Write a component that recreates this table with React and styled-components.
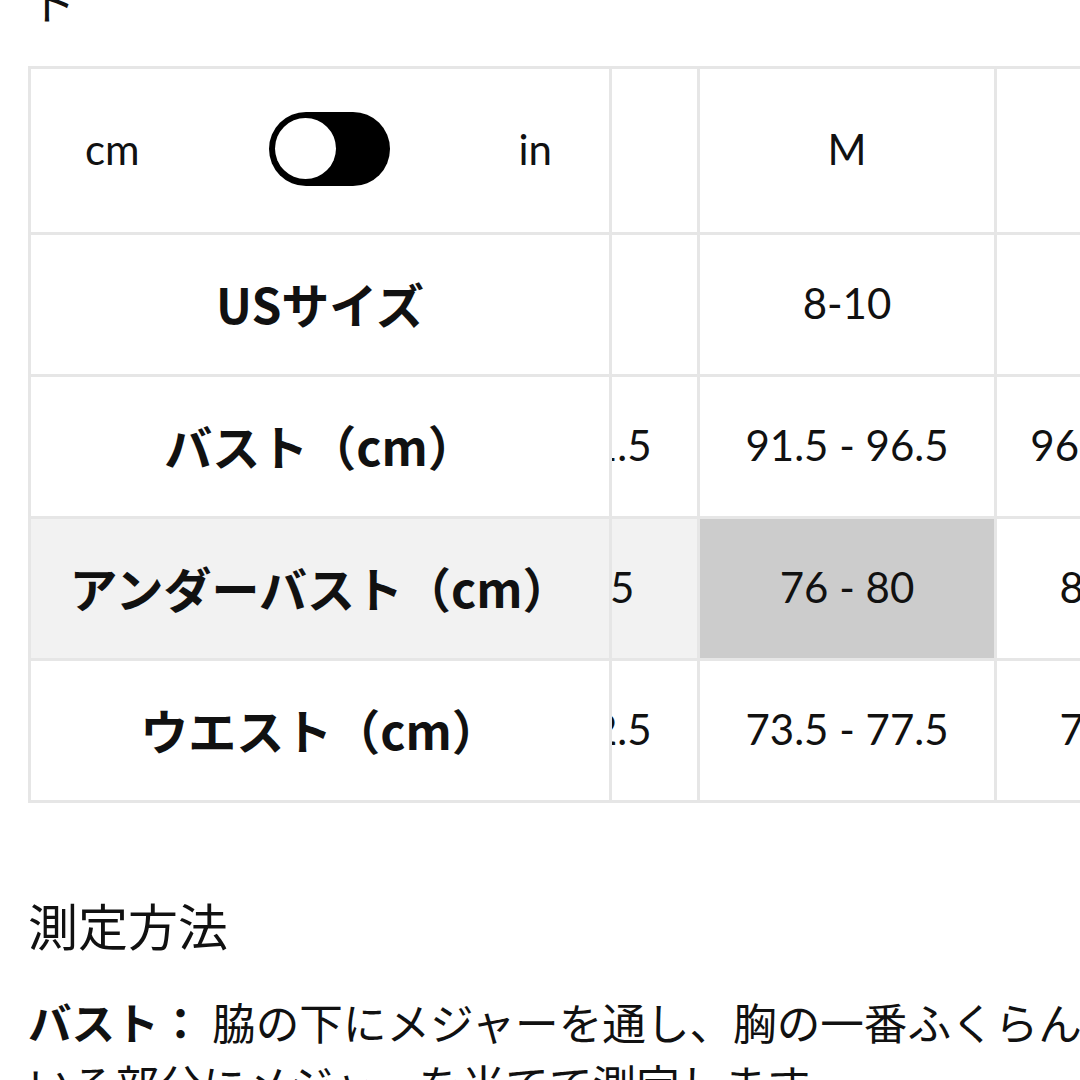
import { useLayoutEffect, useRef } from "react";
import styled, { createGlobalStyle } from "styled-components";

const GlobalStyle = createGlobalStyle`
  html, body {
    margin: 0;
    padding: 0;
    overflow: hidden;
    background: #fff;
  }
  body {
    font-family: "Lato", "Noto Sans CJK JP", sans-serif;
    color: #111;
  }
`;

const Page = styled("main")`
  width: 1180px;
  padding: 0 28px;
  margin-top: -33px;
`;

const PageTitle = styled("h2")`
  margin: 0 0 35px 3px;
  font-family: "Noto Sans CJK JP", sans-serif;
  font-weight: 400;
  font-size: 46px;
  line-height: 1.4;
`;

const Frame = styled("div")`
  border-top: 3px solid #e6e6e6;
  border-left: 3px solid #e6e6e6;
  overflow-x: auto;
  scrollbar-width: none;
  &::-webkit-scrollbar {
    display: none;
  }
`;

const Grid = styled("div")`
  display: grid;
  grid-template-columns: 581px repeat(${(p) => p.$cols}, 297px);
  grid-template-rows: 166px;
  grid-auto-rows: 142px;
  width: max-content;
`;

const tones = {
  plain: "#ffffff",
  row: "#f2f2f2",
  active: "#cccccc",
};

const Cell = styled("div")`
  display: flex;
  align-items: center;
  justify-content: center;
  border-right: 3px solid #e6e6e6;
  border-bottom: 3px solid #e6e6e6;
  background: ${(p) => tones[p.$tone || "plain"]};
  font-size: 42px;
  white-space: nowrap;
  padding-bottom: 4px;
`;

const LabelCell = styled(Cell)`
  position: sticky;
  left: 0;
  z-index: 1;
  font-family: "Noto Sans CJK JP", sans-serif;
  font-weight: 700;
  font-size: 48px;
`;

const UnitCell = styled(LabelCell)`
  justify-content: space-between;
  padding: 0 57px 4px 54px;
  font-family: "Lato", sans-serif;
  font-weight: 400;
  font-size: 42px;
`;

const Switch = styled("span")`
  display: flex;
  align-items: center;
  box-sizing: border-box;
  width: 121px;
  height: 74px;
  padding: 0 6px;
  border-radius: 37px;
  background: #000;
`;

const Knob = styled("span")`
  width: 61px;
  height: 61px;
  border-radius: 50%;
  background: #fff;
`;

const SectionTitle = styled("h3")`
  margin: 84px 0 28px;
  font-family: "Noto Sans CJK JP", sans-serif;
  font-weight: 400;
  font-size: 50px;
  line-height: 1.5;
`;

const Paragraph = styled("p")`
  margin: 0;
  font-family: "Noto Sans CJK JP", sans-serif;
  font-size: 43.6px;
  line-height: 62px;
  white-space: nowrap;
`;

const sizes = ["XS", "S", "M", "L", "XL"];

const rows = [
  { label: "USサイズ", values: ["0-2", "4-6", "8-10", "12-14", "16-18"] },
  {
    label: "バスト（cm）",
    values: ["81.5 - 86.5", "86.5 - 91.5", "91.5 - 96.5", "96.5 - 101.5", "101.5 - 106.5"],
  },
  {
    label: "アンダーバスト（cm）",
    values: ["67 - 71.5", "72 - 75.5", "76 - 80", "80 - 84.5", "85 - 89"],
    hover: 2,
  },
  {
    label: "ウエスト（cm）",
    values: ["64.5 - 68.5", "68.5 - 72.5", "73.5 - 77.5", "78 - 82.5", "83 - 87.5"],
  },
];

const toneFor = (row, index) => {
  if (row.hover === undefined) return "plain";
  if (index === row.hover) return "active";
  return index < row.hover ? "row" : "plain";
};

const SizeChart = () => {
  const frameRef = useRef(null);

  useLayoutEffect(() => {
    // scrolled so that the M column sits next to the sticky labels
    if (frameRef.current) frameRef.current.scrollLeft = 506;
  }, []);

  return (
    <Frame ref={frameRef}>
      <Grid $cols={sizes.length}>
        <UnitCell>
          <span>cm</span>
          <Switch role="switch" aria-checked="false">
            <Knob />
          </Switch>
          <span>in</span>
        </UnitCell>
        {sizes.map((size) => (
          <Cell key={size}>{size}</Cell>
        ))}
        {rows.map((row) => [
          <LabelCell key={row.label} $tone={row.hover !== undefined ? "row" : "plain"}>
            {row.label}
          </LabelCell>,
          ...row.values.map((value, i) => (
            <Cell key={row.label + i} $tone={toneFor(row, i)}>
              {value}
            </Cell>
          )),
        ])}
      </Grid>
    </Frame>
  );
};

const App = () => (
  <>
    <GlobalStyle />
    <Page>
      <PageTitle>ド</PageTitle>
      <SizeChart />
      <SectionTitle>測定方法</SectionTitle>
      <Paragraph>
        <b>バスト：</b> 脇の下にメジャーを通し、胸の一番ふくらんで
        <br />
        いる部分にメジャーを当てて測定します。
      </Paragraph>
    </Page>
  </>
);

export default App;
